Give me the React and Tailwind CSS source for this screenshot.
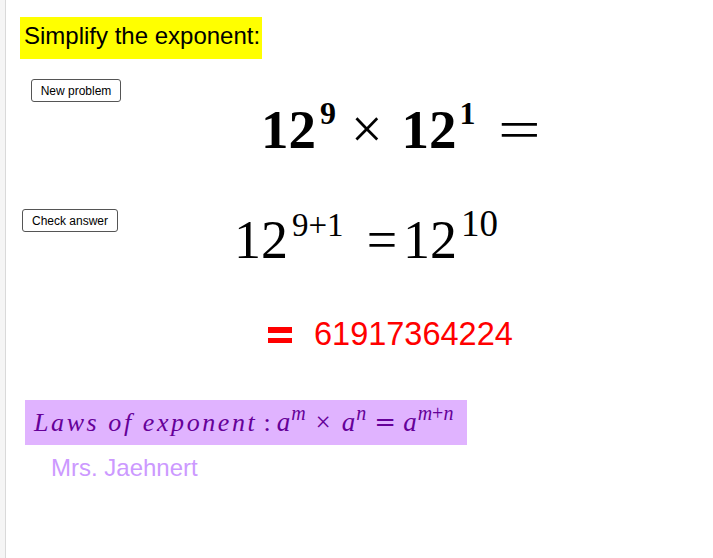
import React from 'react';

const serif = { fontFamily: '"Liberation Serif", "DejaVu Serif", serif' };
const wideOp = { fontFamily: '"DejaVu Serif", "Liberation Serif", serif', fontStyle: 'normal' };

function Btn({ children, className = '' }) {
  return (
    <button className={`h-[23px] shrink-0 rounded-[3px] border border-[#555] bg-white text-[12px] leading-none text-black font-['Liberation_Sans',Arial,sans-serif] ${className}`}>
      {children}
    </button>
  );
}

export default function App() {
  return (
    <div className="flex h-[558px] w-full overflow-hidden bg-white font-['Liberation_Sans',Arial,sans-serif]">
      {/* left splitter strip */}
      <div className="w-[6px] shrink-0 border-r border-[#d9d9d9] bg-[#f5f5f5]" />

      <main className="flex flex-1 flex-col items-start pl-[14px] pt-[17px]">
        <div className="h-[42px] bg-[#ffff00] pl-[4px] pr-[2px] pt-[7px] text-[24px] leading-none text-black">
          Simplify the exponent:
        </div>

        {/* row 1: new problem + bold expression */}
        <div className="mt-[20px] flex h-[130px] items-start">
          <Btn className="ml-[11px] w-[90px]">New problem</Btn>
          <div className="ml-[140px] mt-[22px] flex items-baseline font-bold leading-none text-black" style={serif}>
            <span className="text-[55px]">12</span>
            <span className="relative -top-[24px] ml-[4px] text-[32px]">9</span>
            <span className="ml-[15px] text-[56px] font-normal">×</span>
            <span className="ml-[19px] text-[55px]">12</span>
            <span className="relative -top-[24px] ml-[3px] text-[32px]">1</span>
            <span className="ml-[22px] inline-block origin-left scale-x-[1.4] text-[54px] font-normal">=</span>
          </div>
        </div>

        {/* row 2: check answer + working */}
        <div className="flex h-[109px] items-start">
          <Btn className="ml-[2px] w-[96px]">Check answer</Btn>
          <div className="ml-[116px] mt-[4px] flex items-baseline leading-none text-black" style={serif}>
            <span className="text-[54px]">12</span>
            <span className="relative -top-[22px] ml-[4px] text-[33px]">9+1</span>
            <span className="ml-[23px] text-[54px]">=</span>
            <span className="ml-[6px] text-[54px]">12</span>
            <span className="relative -top-[22px] ml-[4px] text-[37px]">10</span>
          </div>
        </div>

        {/* row 3: red result */}
        <div className="flex h-[82px] items-start">
          <div className="ml-[248px] mt-[9px] flex w-[24px] flex-col gap-[5px]">
            <div className="h-[6px] bg-[#ff0000]" />
            <div className="h-[5px] bg-[#ff0000]" />
          </div>
          <span className="ml-[22px] text-[32.5px] leading-none text-[#ff0000]">61917364224</span>
        </div>

        {/* law box */}
        <div className="ml-[5px] flex h-[45px] w-[442px] items-baseline bg-[#e0b3ff] pl-[9px] pt-[9px] italic leading-none text-[#660099]" style={serif}>
          <span className="text-[26px] tracking-[2.6px]">Laws</span>
          <span className="ml-[9px] text-[26px] tracking-[2.6px]">of</span>
          <span className="ml-[9px] text-[26px] tracking-[2.6px]">exponent</span>
          <span className="ml-[6px] text-[26px] not-italic">:</span>
          <span className="ml-[6px] text-[27px]">a</span>
          <span className="relative -top-[11px] ml-[1px] text-[20px]">m</span>
          <span className="ml-[10px] text-[27px] not-italic">×</span>
          <span className="ml-[11px] text-[27px]">a</span>
          <span className="relative -top-[11px] ml-[1px] text-[20px]">n</span>
          <span className="ml-[8px] text-[26px]" style={wideOp}>=</span>
          <span className="ml-[7px] text-[27px]">a</span>
          <span className="relative -top-[11px] ml-[1px] text-[20px]">m<span className="not-italic">+</span>n</span>
        </div>

        <div className="ml-[31px] mt-[11px] text-[24px] leading-none text-[#cc99ff]">Mrs. Jaehnert</div>
      </main>
    </div>
  );
}
